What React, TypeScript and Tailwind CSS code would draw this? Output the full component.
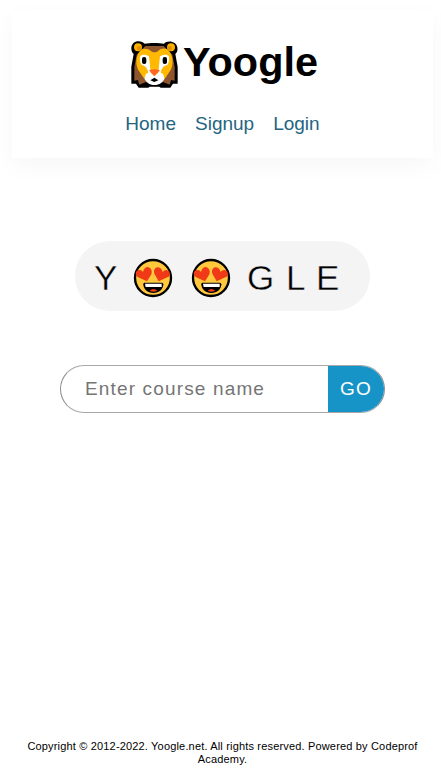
function Lion() {
  return (
    <svg className="h-[47px] w-[47px] shrink-0" viewBox="10 9 141 141" aria-hidden="true">
      <path
        d="M11 137V86L18 48C7 39 8 14 28 10C37 8 46 12 51 17C65 14 95 14 109 17C115 9 132 8 141 15C153 25 151 41 143 48L150 86V137H136L128 149H99L95 146H66L62 149H33L25 137Z"
        fill="#000"
      />
      <path d="M20 128V88L27 50L53 24H108L134 50L141 88V128L130 126L126 140L108 133H53L35 140L31 126Z" fill="#8e562e" />
      <circle cx="31" cy="28" r="12" fill="#ffb000" />
      <circle cx="130" cy="28" r="12" fill="#ffb000" />
      <circle cx="35" cy="31" r="7" fill="#e09200" />
      <circle cx="126" cy="31" r="7" fill="#e09200" />
      <path d="M37 39C47 28 61 32 69 38C75 44 86 44 92 38C101 31 114 28 124 39C137 55 138 78 129 96L113 120H48L32 96C23 78 24 55 37 39Z" fill="#ffb900" />
      <path d="M38 54C44 48 57 50 64 55L67 83L69 104L62 106C60 91 53 83 42 81C36 72 35 61 38 54ZM123 54C117 48 104 50 97 55L94 83L92 104L99 106C101 91 108 83 119 81C125 72 126 61 123 54Z" fill="#fff" />
      <path d="M55 107L67 103L80 113L94 103L106 107L111 122C104 133 97 141 80 141C64 141 57 133 50 122Z" fill="#fff" />
      <rect x="43" y="57" width="13" height="21" rx="6" fill="#000" />
      <rect x="105" y="57" width="13" height="21" rx="6" fill="#000" />
      <path d="M64 97Q80 91 97 97L80 115Z" fill="#ff6722" />
      <path d="M68 127L80 119L92 127L80 132Z" fill="#000" />
    </svg>
  );
}

function HeartEyes() {
  return (
    <svg className="-mt-px h-10 w-10 shrink-0" viewBox="0 0 120 120" aria-hidden="true">
      <circle cx="60" cy="60" r="54" fill="#ffc83d" stroke="#000" strokeWidth="7" />
      <path d="M42 70L14 57C5 50 8 36 18 36C23 35 28 38 30 42C33 28 43 24 50 29C60 37 56 49 52 54ZM77 70L68 54C59 43 63 29 73 28C81 26 87 34 89 42C94 33 107 34 110 44C112 52 109 56 103 58Z" fill="#f03a17" />
      <path d="M34 74H86Q91 74 91 79C90 95 79 105 61 105C43 105 32 95 31 79Q31 74 34 74Z" fill="#000" />
      <path d="M36 77H86V87H38Z" fill="#fff" />
      <path d="M50 98Q61 88 73 98Q61 104 50 98Z" fill="#f03a17" />
    </svg>
  );
}

export default function App() {
  return (
    <div className="flex h-[782px] w-full flex-col items-center overflow-hidden bg-white font-['Liberation_Sans',Arial,sans-serif] text-black">
      <header className="mt-[10px] mr-[8px] ml-[12px] flex h-[148px] w-[421px] flex-col items-center shadow-[0_8px_24px_rgba(0,0,0,0.035)]">
        <h1 className="mt-[29px] flex h-[48px] items-center pl-[4px] text-[41.4px] leading-[46px] font-bold">
          <span className="mr-[5px] pt-[2px]"><Lion /></span>
          <span className="-mt-[3px]">Yoogle</span>
        </h1>
        <nav className="mt-[26px] flex gap-[19px] text-[19px] leading-[22px] text-[#24657f]">
          <a href="#home">Home</a>
          <a href="#signup">Signup</a>
          <a href="#login">Login</a>
        </nav>
      </header>

      <div className="mt-[83px] ml-[4px] flex h-[70px] w-[295px] items-center rounded-full bg-[#f4f4f4] pt-[5px] pl-[20px] text-[35px] leading-[40px] [-webkit-text-stroke:0.4px_#f4f4f4]" aria-label="Yoogle">
        <span className="-mt-[2px] w-[38px] -indent-px">Y</span>
        <HeartEyes />
        <span className="w-[18px]" />
        <HeartEyes />
        <span className="w-[16px]" />
        <span className="-mt-[2px] w-[39px]">G</span>
        <span className="-mt-[2px] w-[30px]">L</span>
        <span className="-mt-[2px]">E</span>
      </div>

      <form className="mt-[54px] ml-[4px] flex h-[48px] w-[325px] overflow-hidden rounded-full border border-[#8c8c8c] border-y-[#a8a8a8] text-[19px] tracking-[1.15px]">
        <input className="w-[267px] pl-[24px] outline-none placeholder:text-[#757575]" placeholder="Enter course name" />
        <button type="button" className="flex-1 bg-[#1794c7] text-white">GO</button>
      </form>

      <footer className="mt-auto mb-[16px] ml-[4px] w-[400px] text-center text-[11px] leading-[13px] tracking-[0.17px]">
        Copyright © 2012-2022. Yoogle.net. All rights reserved. Powered by Codeprof Academy.
      </footer>
    </div>
  );
}
